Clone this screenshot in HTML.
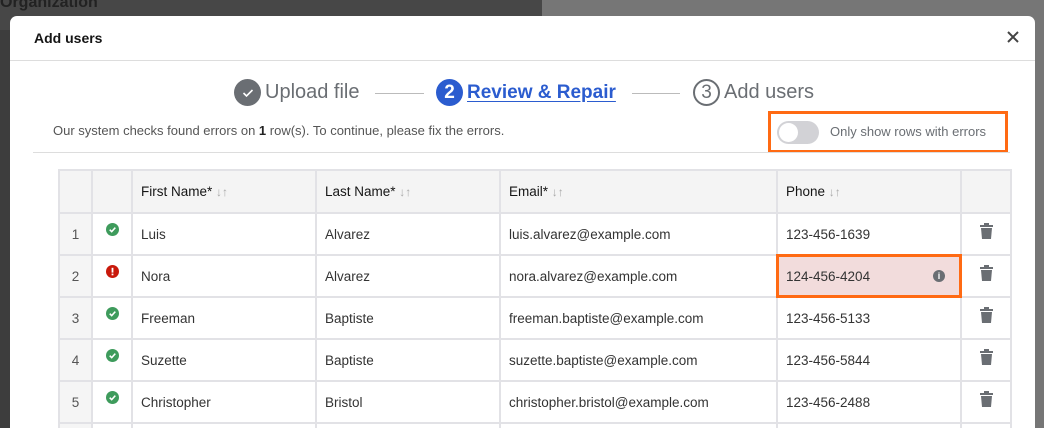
<!DOCTYPE html>
<html><head><meta charset="utf-8"><style>
*{box-sizing:border-box;margin:0;padding:0}
html,body{width:1044px;height:428px;overflow:hidden}
body{background:#3d3d3d;font-family:"Liberation Sans",sans-serif;position:relative}
.bgr{position:absolute;left:542px;top:0;right:0;bottom:0;background:#767676}
.bgtop{position:absolute;left:0;top:0;width:542px;height:30px;background:#474747}
.org{position:absolute;left:0;top:-6px;font-size:16px;font-weight:bold;color:#222}
.modal{position:absolute;left:10px;top:16px;width:1025px;height:412px;background:#fff;border-radius:7px 7px 0 0;overflow:hidden}
.title{position:absolute;left:24px;top:14px;font-size:14px;font-weight:bold;color:#151515}
.close{position:absolute;left:997px;top:15px}
.hr1{position:absolute;left:0;top:44px;width:1025px;height:1px;background:#ddd}
.step{position:absolute;top:63px;font-size:20px;color:#6a6e73;display:flex;align-items:center}
.circ{width:27px;height:27px;border-radius:50%;display:inline-flex;align-items:center;justify-content:center;margin-right:4px;font-size:19px}
.line{position:absolute;top:77px;height:1px;background:#bbb}
.msg{position:absolute;left:43px;top:107px;font-size:13px;color:#555}
.tog{position:absolute;left:758px;top:95px;width:240px;height:42px;border:3px solid #ff6a13}
.sw{position:absolute;left:6px;top:7px;width:42px;height:23px;border-radius:12px;background:#d2d2d6}
.sw:after{content:"";position:absolute;left:2px;top:2px;width:19px;height:19px;border-radius:50%;background:#fff}
.togt{position:absolute;left:59px;top:10px;font-size:13px;color:#6a6e73}
.hr2{position:absolute;left:23px;top:136px;width:977px;height:1px;background:#ddd}
table{position:absolute;left:48px;top:153px;border-collapse:collapse;font-size:13.5px;color:#333}
td,th{border:2px solid #e2e2e6;height:42px;padding:0 0 0 8px;text-align:left;font-weight:normal}
th{background:#f4f4f4;color:#151515;height:43px}
td.n{background:#f5f5f5;text-align:center;padding:0;color:#555}
.ar{color:#aaa;font-size:12px}
.bad{background:#f2dcdc;outline:3px solid #ff6a13;outline-offset:-2px;position:relative}
.info{position:absolute;right:15px;top:14px;width:12px;height:12px;border-radius:50%;background:#6a6e73;color:#fff;font-size:9px;text-align:center;line-height:12px;font-weight:bold}
.tr{text-align:center;padding:0;vertical-align:top;padding-top:9px}
</style></head><body>
<div class="bgtop"></div><div class="bgr"></div>
<div class="org">Organization</div>
<div class="modal">
<div class="title">Add users</div>
<svg class="close" width="12" height="12" viewBox="0 0 12 12"><path d="M1 1L11 11M11 1L1 11" stroke="#444" stroke-width="2"/></svg>
<div class="hr1"></div>
<div class="step" style="left:224px"><span class="circ" style="background:#6a6e73"><svg width="12" height="10" viewBox="0 0 12 10"><path d="M1.5 5L4.5 8L10.5 2" stroke="#fff" stroke-width="1.6" fill="none"/></svg></span>Upload file</div>
<div class="line" style="left:365px;width:49px"></div>
<div class="step" style="left:426px;color:#2b5ccf;font-weight:bold;font-size:19px"><span class="circ" style="background:#2b5ccf;color:#fff">2</span><span style="text-decoration:underline;text-underline-offset:3px">Review &amp; Repair</span></div>
<div class="line" style="left:622px;width:48px"></div>
<div class="step" style="left:683px"><span class="circ" style="border:2px solid #6a6e73;color:#6a6e73">3</span>Add users</div>
<div class="msg">Our system checks found errors on <b style="color:#222">1</b> row(s). To continue, please fix the errors.</div>
<div class="tog"><div class="sw"></div><div class="togt">Only show rows with errors</div></div>
<div class="hr2"></div>
<table>
<tr><th style="width:33px"></th><th style="width:40px"></th><th style="width:184px">First Name* <span class="ar">↓↑</span></th><th style="width:184px">Last Name* <span class="ar">↓↑</span></th><th style="width:277px">Email* <span class="ar">↓↑</span></th><th style="width:184px">Phone <span class="ar">↓↑</span></th><th style="width:50px"></th></tr>
<tr><td class="n">1</td><td class="tr">OK</td><td>Luis</td><td>Alvarez</td><td>luis.alvarez@example.com</td><td>123-456-1639</td><td class="tr">TR</td></tr>
<tr><td class="n">2</td><td class="tr">ER</td><td>Nora</td><td>Alvarez</td><td>nora.alvarez@example.com</td><td class="bad">124-456-4204<span class="info">i</span></td><td class="tr">TR</td></tr>
<tr><td class="n">3</td><td class="tr">OK</td><td>Freeman</td><td>Baptiste</td><td>freeman.baptiste@example.com</td><td>123-456-5133</td><td class="tr">TR</td></tr>
<tr><td class="n">4</td><td class="tr">OK</td><td>Suzette</td><td>Baptiste</td><td>suzette.baptiste@example.com</td><td>123-456-5844</td><td class="tr">TR</td></tr>
<tr><td class="n">5</td><td class="tr">OK</td><td>Christopher</td><td>Bristol</td><td>christopher.bristol@example.com</td><td>123-456-2488</td><td class="tr">TR</td></tr>
<tr><td class="n"></td><td></td><td></td><td></td><td></td><td></td><td></td></tr>
</table>
</div>
<script>
var ok='<svg width="13" height="13" viewBox="0 0 13 13"><circle cx="6.5" cy="6.5" r="6.5" fill="#3e9b5c"/><path d="M3.7 6.7L5.7 8.6L9.3 4.6" stroke="#fff" stroke-width="1.6" fill="none"/></svg>';
var er='<svg width="13" height="13" viewBox="0 0 13 13"><circle cx="6.5" cy="6.5" r="6.5" fill="#c9190b"/><rect x="5.6" y="2.8" width="1.8" height="4.8" fill="#fff"/><rect x="5.6" y="8.6" width="1.8" height="1.7" fill="#fff"/></svg>';
var tr='<svg width="13" height="16" viewBox="0 0 13 16"><rect x="0" y="2" width="13" height="2" fill="#6a6e73"/><rect x="4" y="0" width="5" height="2" fill="#6a6e73"/><path d="M1 5H12L11 16H2Z" fill="#6a6e73"/></svg>';
document.querySelectorAll('td.tr').forEach(function(t){var v=t.textContent;t.innerHTML=v=='OK'?ok:v=='ER'?er:tr;});
</script>
</body></html>
